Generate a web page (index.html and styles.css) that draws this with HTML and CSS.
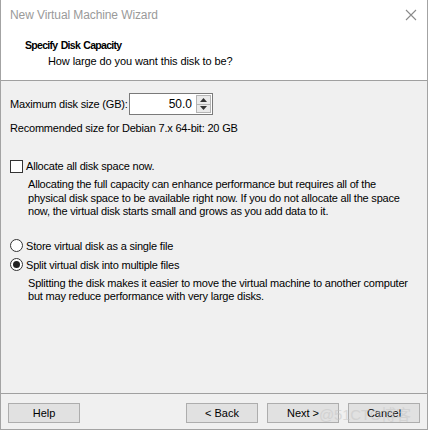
FILE: index.html
```html
<!DOCTYPE html>
<html>
<head>
<meta charset="utf-8">
<link rel="stylesheet" href="styles.css">
</head>
<body>
<div class="window">
  <div class="titlebar">
    <span class="title-text">New Virtual Machine Wizard</span>
    <svg class="close" width="12" height="12" viewBox="0 0 12 12"><path d="M1 1L11 11M11 1L1 11" stroke="#8a8a8a" stroke-width="1.1" fill="none"/></svg>
  </div>
  <div class="header">
    <div class="h-title">Specify Disk Capacity</div>
    <div class="h-sub">How large do you want this disk to be?</div>
  </div>
  <div class="content">
    <div class="size-row">
      <span class="label">Maximum disk size (GB):</span>
      <div class="spin">
        <span class="spin-value">50.0</span>
        <div class="spin-btns">
          <span class="spin-btn"><svg width="7" height="4" viewBox="0 0 7 4"><path d="M3.5 0L7 4H0Z" fill="#333"/></svg></span>
          <span class="spin-btn"><svg width="7" height="4" viewBox="0 0 7 4"><path d="M0 0H7L3.5 4Z" fill="#333"/></svg></span>
        </div>
      </div>
    </div>
    <div class="recommend">Recommended size for Debian 7.x 64-bit: 20 GB</div>
    <div class="option check-row">
      <span class="checkbox"></span>
      <span>Allocate all disk space now.</span>
    </div>
    <p class="desc desc-alloc">Allocating the full capacity can enhance performance but requires all of the physical disk space to be available right now. If you do not allocate all the space now, the virtual disk starts small and grows as you add data to it.</p>
    <div class="option radio-row first">
      <span class="radio"></span>
      <span>Store virtual disk as a single file</span>
    </div>
    <div class="option radio-row second">
      <span class="radio checked"></span>
      <span>Split virtual disk into multiple files</span>
    </div>
    <p class="desc desc-split">Splitting the disk makes it easier to move the virtual machine to another computer but may reduce performance with very large disks.</p>
  </div>
  <div class="footer">
    <button class="btn">Help</button>
    <div class="spacer"></div>
    <button class="btn">&lt; Back</button>
    <button class="btn">Next &gt;</button>
    <button class="btn">Cancel</button>
    <span class="watermark">@51CTO博客</span>
  </div>
</div>
</body>
</html>
```

FILE: styles.css
```css
* { box-sizing: border-box; }
html, body { margin: 0; padding: 0; background: #f0f0f0; }
body { width: 428px; height: 430px; overflow: hidden; }

.window {
  width: 428px;
  height: 430px;
  border-left: 1px solid #a3a3a3;
  border-right: 1px solid #a3a3a3;
  border-bottom: 1px solid #a3a3a3;
  background: #f0f0f0;
  display: flex;
  flex-direction: column;
  font-family: "Liberation Sans", Arial, sans-serif;
  font-size: 11px;
  letter-spacing: -0.2px;
  color: #000;
}

.titlebar {
  height: 30px;
  background: #fff;
  display: flex;
  align-items: center;
  justify-content: space-between;
  padding: 0 10px 0 9px;
}
.title-text {
  font-family: "Liberation Sans", Arial, sans-serif;
  font-size: 12px;
  letter-spacing: -0.1px;
  color: #9a9a9a;
}
.close { display: block; }

.header {
  height: 51px;
  background: #fff;
  border-bottom: 1px solid #a0a0a0;
  padding: 8px 0 0 24px;
}
.h-title {
  font-weight: bold;
  font-size: 10.5px;
  letter-spacing: -0.7px;
  word-spacing: 1px;
  line-height: 14px;
}
.h-sub {
  line-height: 14px;
  padding-left: 23px;
  margin-top: 2px;
  letter-spacing: -0.1px;
}

.content {
  flex: 1;
  padding: 12px 0 0 9px;
}

.size-row {
  display: flex;
  align-items: center;
  height: 22px;
}
.size-row .label {
  width: 119px;
  flex-shrink: 0;
  white-space: nowrap;
}
.spin {
  width: 84px;
  height: 22px;
  background: #fff;
  border: 1px solid #7a7a7a;
  display: flex;
  align-items: center;
  justify-content: flex-end;
}
.spin-value {
  font-size: 12px;
  letter-spacing: 0;
  padding-right: 4px;
}
.spin-btns {
  width: 15px;
  height: 18px;
  margin-right: 1px;
  display: flex;
  flex-direction: column;
  border: 1px solid #b5b5b5;
  background: #eaeaea;
}
.spin-btn {
  flex: 1;
  display: flex;
  align-items: center;
  justify-content: center;
}
.spin-btn + .spin-btn { border-top: 1px solid #b5b5b5; }

.recommend {
  margin-top: 6px;
  line-height: 14px;
}

.option {
  display: flex;
  align-items: center;
  line-height: 14px;
  gap: 3px;
}
.check-row { margin-top: 24px; }
.checkbox {
  width: 13px;
  height: 13px;
  border: 1px solid #333;
  background: #fff;
}
.desc {
  margin: 5px 0 0 18px;
  line-height: 13.5px;
  width: 388px;
}
.radio-row.first { margin-top: 20px; }
.radio-row.second { margin-top: 5px; }
.radio {
  width: 13px;
  height: 13px;
  border: 1px solid #333;
  border-radius: 50%;
  background: #fff;
  position: relative;
}
.radio.checked::after {
  content: "";
  position: absolute;
  left: 2px;
  top: 2px;
  width: 7px;
  height: 7px;
  border-radius: 50%;
  background: #222;
}

.footer {
  height: 36px;
  border-top: 1px solid #a0a0a0;
  display: flex;
  align-items: flex-start;
  padding: 9px 7px 0 7px;
  gap: 9px;
  position: relative;
}
.spacer { flex: 1; }
.btn {
  width: 72px;
  height: 20px;
  border: 1px solid #adadad;
  background: #e1e1e1;
  font-family: "Liberation Sans", Arial, sans-serif;
  font-size: 11px;
  color: #000;
  padding: 0;
}
.watermark {
  position: absolute;
  left: 318px;
  top: 9px;
  font-size: 15px;
  font-family: "Liberation Sans", "Noto Sans CJK SC", sans-serif;
  color: #c4c4c4;
  opacity: 0.5;
  pointer-events: none;
}
```
